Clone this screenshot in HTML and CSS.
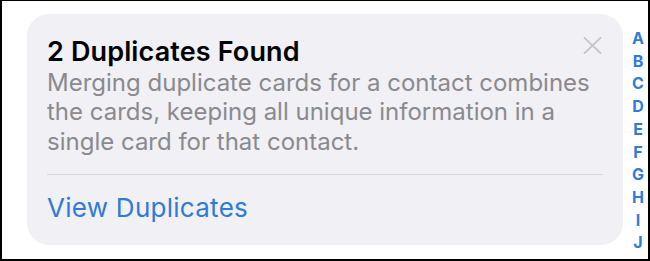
FILE: index.html
```html
<!DOCTYPE html>
<html>
<head>
<meta charset="utf-8">
<link rel="stylesheet" href="styles.css">
</head>
<body>
<div class="frame">
  <div class="card">
    <div class="head">
      <h1 class="title">2 Duplicates Found</h1>
      <svg class="close" width="19" height="17" viewBox="0 0 19 17"><path d="M1.5 0.8 L17.5 16.2 M17.5 0.8 L1.5 16.2" stroke="#c3c3c8" stroke-width="1.8" stroke-linecap="round" fill="none"/></svg>
    </div>
    <p class="desc">Merging duplicate cards for a contact combines<br>the cards, keeping all unique information in a<br>single card for that contact.</p>
    <div class="sep"></div>
    <div class="action">View Duplicates</div>
  </div>
  <div class="index">
    <span>A</span><span>B</span><span>C</span><span>D</span><span>E</span><span>F</span><span>G</span><span>H</span><span>I</span><span>J</span><span>K</span>
  </div>
</div>
</body>
</html>
```
FILE: styles.css
```css
* { box-sizing: border-box; }
html, body { margin: 0; padding: 0; background: #fff; }
body { width: 650px; height: 261px; overflow: hidden; font-family: Inter, "Noto Sans", sans-serif; }
.frame {
  width: 650px; height: 261px;
  border: 2px solid #000; border-top-width: 1px;
  display: flex; align-items: flex-start;
  padding: 13px 0 0 25px;
  overflow: hidden;
}
.card {
  width: 596px; height: 231px;
  background: #f0f0f5;
  border-radius: 22px;
  padding: 22px 0 0 20px;
  flex: none;
}
.head { display: flex; justify-content: space-between; align-items: flex-start; padding-right: 20px; }
.title { margin: 0; font-size: 27px; line-height: 32px; font-weight: 600; color: #000; letter-spacing: 0.13px; }
.close { margin-top: 1px; margin-right: 1px; }
.desc { margin: 0; font-size: 24px; line-height: 29.4px; color: #8a8a8e; white-space: nowrap; letter-spacing: 0; }
.sep { height: 1px; background: #d6d6db; margin: 17.5px 0 0 0; width: 556px; }
.action { margin-top: 17px; font-size: 26px; line-height: 32px; color: #2f7bd8; letter-spacing: 0.27px; }
.index {
  display: flex; flex-direction: column; align-items: center;
  width: 24px; margin-left: 5px; padding-top: 13px;
}
.index span { font-size: 16px; line-height: 22.7px; font-weight: 700; color: #2f7bd8; }
```
